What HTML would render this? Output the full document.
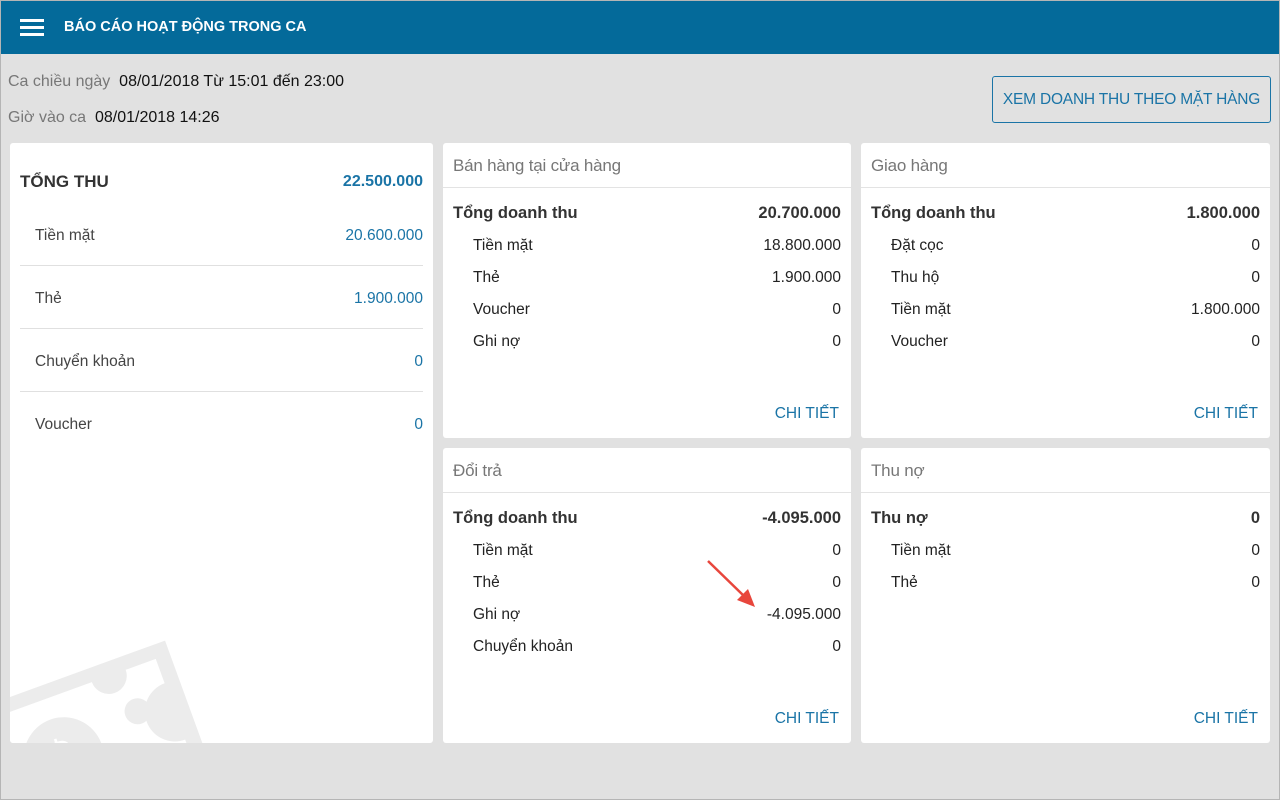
<!DOCTYPE html>
<html><head><meta charset="utf-8"><style>
*{margin:0;padding:0;box-sizing:border-box}
body{width:1280px;height:800px;background:#e1e1e1;font-family:"Liberation Sans",Roboto,sans-serif;position:relative;overflow:hidden}
.frame{position:absolute;left:0;top:0;width:1280px;height:800px;border:1px solid #b5b5b5;pointer-events:none}
.a{position:absolute;white-space:nowrap}
.hdr{position:absolute;left:0;top:0;width:1280px;height:54px;background:#046a9a}
.card{position:absolute;background:#fff;border-radius:3px;overflow:hidden}
.ch{position:absolute;left:0;top:0;right:0;height:45px;border-bottom:1px solid #e3e3e3;font-size:17px;color:#777;padding:13px 10px;letter-spacing:-0.2px}
.r{position:absolute;left:30px;right:10px;font-size:15.5px;color:#222;height:20px}
.r span{position:absolute;right:0}
.r.b{left:10px;font-weight:bold;font-size:16.5px;color:#333}
.ct{position:absolute;right:12px;font-size:15.5px;color:#1a74a6}
.lr{position:absolute;left:25px;right:10px;font-size:15.5px;color:#444}
.lr span{position:absolute;right:0;color:#1a74a6}
.sep{position:absolute;left:10px;right:10px;height:1px;background:#e0e0e0}
</style></head><body>
<div class="hdr">
 <div class="a" style="left:20px;top:19px;width:24px;height:3px;background:#fff"></div>
 <div class="a" style="left:20px;top:26px;width:24px;height:3px;background:#fff"></div>
 <div class="a" style="left:20px;top:33px;width:24px;height:3px;background:#fff"></div>
 <div class="a" style="left:64px;top:19px;color:#fff;font-weight:bold;font-size:14.5px">BÁO CÁO HOẠT ĐỘNG TRONG CA</div>
</div>
<div class="a" style="left:8px;top:73px;font-size:16px;color:#777">Ca chiều ngày <span style="color:#111">&nbsp;08/01/2018 Từ 15:01 đến 23:00</span></div>
<div class="a" style="left:8px;top:109px;font-size:16px;color:#777">Giờ vào ca <span style="color:#111">&nbsp;08/01/2018 14:26</span></div>
<div class="a" style="left:992px;top:76px;width:279px;height:47px;border:1px solid #1a74a6;border-radius:3px;color:#1a74a6;font-size:15.5px;text-align:center;line-height:45px;letter-spacing:-0.2px">XEM DOANH THU THEO MẶT HÀNG</div>

<div class="card" style="left:10px;top:143px;width:423px;height:600px">
 <svg style="position:absolute;left:0;top:0" width="423" height="600">
  <g transform="translate(0,554) rotate(-20)" fill="#ececec">
   <path d="M-20 0 H165 V130 H-20 Z"/>
   <path d="M-20 14 H82 A18 18 0 0 0 118 14 H150 V40 A22 22 0 0 0 150 100 V130 H-20 Z" fill="#fff"/>
   <circle cx="30" cy="75" r="40" fill="#ececec"/>
   <text x="14" y="92" font-size="50" font-weight="bold" fill="#fff" font-family="Liberation Sans">$</text>
   <circle cx="115" cy="57" r="13" fill="#ececec"/>
  </g>
 </svg>
 <div class="a" style="left:10px;top:29px;font-size:17px;font-weight:bold;color:#333">TỔNG THU</div>
 <div class="a" style="right:10px;top:30px;font-size:16px;font-weight:bold;color:#1a74a6">22.500.000</div>
 <div class="lr" style="top:84px">Tiền mặt<span>20.600.000</span></div>
 <div class="sep" style="top:122px"></div>
 <div class="lr" style="top:147px">Thẻ<span>1.900.000</span></div>
 <div class="sep" style="top:185px"></div>
 <div class="lr" style="top:210px">Chuyển khoản<span>0</span></div>
 <div class="sep" style="top:248px"></div>
 <div class="lr" style="top:273px">Voucher<span>0</span></div>
</div>

<div class="card" style="left:443px;top:143px;width:408px;height:295px">
 <div class="ch">Bán hàng tại cửa hàng</div>
 <div class="r b" style="top:61px">Tổng doanh thu<span>20.700.000</span></div>
 <div class="r" style="top:94px">Tiền mặt<span>18.800.000</span></div>
 <div class="r" style="top:126px">Thẻ<span>1.900.000</span></div>
 <div class="r" style="top:158px">Voucher<span>0</span></div>
 <div class="r" style="top:190px">Ghi nợ<span>0</span></div>
 <div class="ct" style="top:262px">CHI TIẾT</div>
</div>
<div class="card" style="left:861px;top:143px;width:409px;height:295px">
 <div class="ch">Giao hàng</div>
 <div class="r b" style="top:61px">Tổng doanh thu<span>1.800.000</span></div>
 <div class="r" style="top:94px">Đặt cọc<span>0</span></div>
 <div class="r" style="top:126px">Thu hộ<span>0</span></div>
 <div class="r" style="top:158px">Tiền mặt<span>1.800.000</span></div>
 <div class="r" style="top:190px">Voucher<span>0</span></div>
 <div class="ct" style="top:262px">CHI TIẾT</div>
</div>
<div class="card" style="left:443px;top:448px;width:408px;height:295px">
 <div class="ch">Đổi trả</div>
 <div class="r b" style="top:61px">Tổng doanh thu<span>-4.095.000</span></div>
 <div class="r" style="top:94px">Tiền mặt<span>0</span></div>
 <div class="r" style="top:126px">Thẻ<span>0</span></div>
 <div class="r" style="top:158px">Ghi nợ<span>-4.095.000</span></div>
 <div class="r" style="top:190px">Chuyển khoản<span>0</span></div>
 <div class="ct" style="top:262px">CHI TIẾT</div>
</div>
<div class="card" style="left:861px;top:448px;width:409px;height:295px">
 <div class="ch">Thu nợ</div>
 <div class="r b" style="top:61px">Thu nợ<span>0</span></div>
 <div class="r" style="top:94px">Tiền mặt<span>0</span></div>
 <div class="r" style="top:126px">Thẻ<span>0</span></div>
 <div class="ct" style="top:262px">CHI TIẾT</div>
</div>
<svg class="a" style="left:0;top:0" width="1280" height="800">
 <line x1="708" y1="561" x2="745" y2="597" stroke="#e8463c" stroke-width="2.5"/>
 <path d="M755 607 L737 600 L748 589 Z" fill="#e8463c"/>
</svg>
<div class="frame"></div>
</body></html>
